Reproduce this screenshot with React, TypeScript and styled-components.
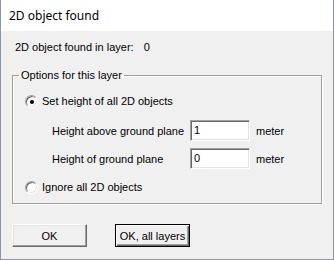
import styled, { createGlobalStyle } from 'styled-components';

const GlobalStyle = createGlobalStyle`
  html, body {
    margin: 0;
    padding: 0;
    background: #ffffff;
  }
`;

const Window = styled.div`
  width: 334px;
  height: 260px;
  box-sizing: border-box;
  border: 1px solid #8896a6;
  border-top: none;
  display: flex;
  flex-direction: column;
  background: #f0f0f0;
  font-family: 'Liberation Sans', Arial, sans-serif;
  font-size: 11px;
  color: #000;
`;

const TitleBar = styled.div`
  height: 31px;
  flex: none;
  background: #ffffff;
  display: flex;
  align-items: center;
  padding-left: 8px;
  padding-bottom: 1px;
  box-sizing: border-box;
  font-family: 'Noto Sans', 'Open Sans', sans-serif;
  font-size: 12px;
`;

const Body = styled.div`
  flex: 1;
  padding: 10px 0 0 11px;
  display: flex;
  flex-direction: column;
`;

const InfoLine = styled.div`
  line-height: 13px;
  padding-left: 3px;
  display: flex;
  gap: 10px;
`;

const Group = styled.fieldset`
  margin: 15px 0 0 0;
  width: 310px;
  box-sizing: border-box;
  padding: 0 0 9px 0;
  border: 1px solid #a0a0a0;
  box-shadow: 1px 1px 0 #ffffff, inset 1px 1px 0 #ffffff;
  display: flex;
  flex-direction: column;
`;

const Legend = styled.legend`
  margin-left: 6px;
  padding: 0 2px;
  line-height: 13px;
`;

const RadioRow = styled.label<{ $top: number }>`
  display: flex;
  align-items: center;
  gap: 4px;
  margin-top: ${(p) => p.$top}px;
  padding-left: 12px;
  line-height: 13px;
`;

const RadioCircle = styled.span<{ $checked?: boolean }>`
  width: 13px;
  height: 13px;
  flex: none;
  box-sizing: border-box;
  border-radius: 50%;
  background: #ffffff;
  border: 1px solid;
  border-color: #a0a0a0 #ffffff #ffffff #a0a0a0;
  box-shadow: inset 1px 1px 0 #696969, inset -1px -1px 0 #e3e3e3;
  display: flex;
  align-items: center;
  justify-content: center;

  &::after {
    content: '';
    width: 4px;
    height: 4px;
    border-radius: 50%;
    background: #000;
    display: ${(p) => (p.$checked ? 'block' : 'none')};
  }
`;

const FieldRow = styled.div<{ $top: number }>`
  display: flex;
  align-items: center;
  margin-top: ${(p) => p.$top}px;
  padding-left: 39px;
`;

const FieldLabel = styled.span`
  width: 138px;
`;

const TextBox = styled.div`
  width: 60px;
  height: 21px;
  box-sizing: border-box;
  background: #ffffff;
  border: 1px solid;
  border-color: #a0a0a0 #ffffff #ffffff #a0a0a0;
  box-shadow: inset 1px 1px 0 #696969, inset -1px -1px 0 #e3e3e3;
  padding: 3px 0 0 3px;
  line-height: 13px;
`;

const Unit = styled.span`
  margin-left: 6px;
`;

const ButtonBar = styled.div`
  display: flex;
  gap: 28px;
  margin-top: 20px;
`;

const Button = styled.div<{ $default?: boolean }>`
  width: 75px;
  height: 23px;
  box-sizing: border-box;
  display: flex;
  align-items: center;
  justify-content: center;
  background: #f0f0f0;
  border: 1px solid;
  border-color: ${(p) => (p.$default ? '#000 #000 #000 #000' : '#ffffff #696969 #696969 #ffffff')};
  box-shadow: ${(p) =>
    p.$default
      ? 'inset 1px 1px 0 #ffffff, inset -1px -1px 0 #696969, inset -2px -2px 0 #a0a0a0'
      : 'inset -1px -1px 0 #a0a0a0, inset 1px 1px 0 #e3e3e3'};
`;

export default function App() {
  return (
    <>
      <GlobalStyle />
      <Window>
        <TitleBar>2D object found</TitleBar>
        <Body>
          <InfoLine>
            <span>2D object found in layer:</span>
            <span>0</span>
          </InfoLine>
          <Group>
            <Legend>Options for this layer</Legend>
            <RadioRow $top={13}>
              <RadioCircle $checked />
              Set height of all 2D objects
            </RadioRow>
            <FieldRow $top={12}>
              <FieldLabel>Height above ground plane</FieldLabel>
              <TextBox>1</TextBox>
              <Unit>meter</Unit>
            </FieldRow>
            <FieldRow $top={7}>
              <FieldLabel>Height of ground plane</FieldLabel>
              <TextBox>0</TextBox>
              <Unit>meter</Unit>
            </FieldRow>
            <RadioRow $top={12}>
              <RadioCircle />
              Ignore all 2D objects
            </RadioRow>
          </Group>
          <ButtonBar>
            <Button>OK</Button>
            <Button $default>OK, all layers</Button>
          </ButtonBar>
        </Body>
      </Window>
    </>
  );
}
